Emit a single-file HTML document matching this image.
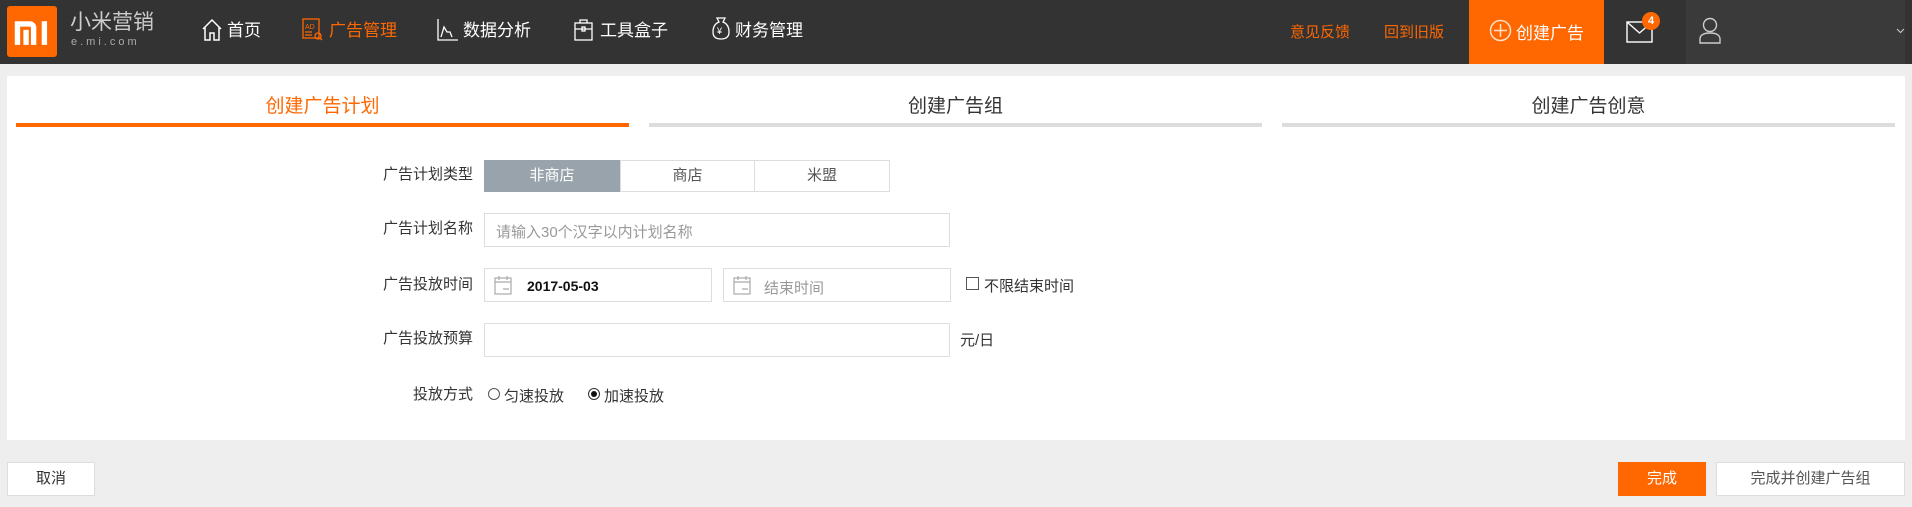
<!DOCTYPE html>
<html><head><meta charset="utf-8"><style>
*{margin:0;padding:0;box-sizing:border-box}
body{width:1912px;height:507px;background:#efeeee;font-family:"Liberation Sans","Noto Sans CJK SC",sans-serif;position:relative;overflow:hidden;color:#333}
.a{position:absolute}
.nav{left:0;top:0;width:1912px;height:64px;background:#333}
.nt{font-size:17px;color:#fff;top:20px;line-height:22px}
.lbl{font-size:15px;color:#333;text-align:right;width:160px;left:313px;line-height:18px}
.inp{background:#fff;border:1px solid #ddd}
.ph{font-size:15px;color:#999}
</style></head><body>
<div class="a nav"></div>
<div class="a" style="left:7px;top:6px;width:50px;height:51px;background:#ff6700;border-radius:3px"></div>
<svg class="a" style="left:12px;top:18px" width="40" height="28" viewBox="0 0 36 26"><path d="M2 3h14a6 6 0 0 1 6 6v16h-5V9a1 1 0 0 0-1-1H7v17H2zM10 11h5v14h-5zM27 3h5v22h-5z" fill="#fff"/></svg>
<div class="a" style="left:70px;top:10px;font-size:21px;color:#ccc;line-height:26px">小米营销</div>
<div class="a" style="left:71px;top:36px;font-size:11px;color:#aaa;letter-spacing:3px">e.mi.com</div>
<svg class="a" style="left:201px;top:18px" width="22" height="23" viewBox="0 0 22 23" fill="none" stroke="#fff" stroke-width="1.5"><path d="M2 11L11 2l9 9M4 9v13h5v-7h4v7h5V9"/></svg>
<div class="a nt" style="left:227px">首页</div>
<svg class="a" style="left:302px;top:18px" width="22" height="23" viewBox="0 0 22 23" fill="none" stroke="#ff6700" stroke-width="1.3"><rect x="1" y="1" width="16" height="19"/><text x="3" y="11" font-size="7" fill="#ff6700" stroke="none">AD</text><path d="M3 14h7M3 17h7"/><circle cx="16" cy="18" r="3"/><path d="M18 20l2 2"/></svg>
<div class="a nt" style="left:329px;color:#ff6700">广告管理</div>
<svg class="a" style="left:437px;top:18px" width="22" height="23" viewBox="0 0 22 23" fill="none" stroke="#fff" stroke-width="1.3"><path d="M1 1v21h20M4 19l3-10 3 5 3 0 2 5"/></svg>
<div class="a nt" style="left:463px">数据分析</div>
<svg class="a" style="left:573px;top:18px" width="22" height="23" viewBox="0 0 22 23" fill="none" stroke="#fff" stroke-width="1.3"><rect x="2" y="5" width="17" height="17"/><path d="M7 5V2h7v3M2 11h17"/><rect x="9" y="9" width="3" height="4"/></svg>
<div class="a nt" style="left:600px">工具盒子</div>
<svg class="a" style="left:711px;top:16px" width="20" height="25" viewBox="0 0 20 25" fill="none" stroke="#fff" stroke-width="1.3"><path d="M6 2h8l-2 4c5 2 6 6 6 10 0 5-3 7-8 7s-8-2-8-7c0-4 1-8 6-10z"/><text x="6" y="18" font-size="9" fill="#fff" stroke="none">¥</text></svg>
<div class="a nt" style="left:735px">财务管理</div>
<div class="a" style="left:1290px;top:21px;font-size:15px;color:#ff6700">意见反馈</div>
<div class="a" style="left:1384px;top:21px;font-size:15px;color:#ff6700">回到旧版</div>
<div class="a" style="left:1469px;top:0;width:135px;height:64px;background:#ff6700"></div>
<svg class="a" style="left:1489px;top:19px" width="23" height="23" viewBox="0 0 23 23" fill="none" stroke="#fde0c8" stroke-width="1.5"><circle cx="11.5" cy="11.5" r="10"/><path d="M11.5 5v13M5 11.5h13"/></svg>
<div class="a" style="left:1516px;top:19px;font-size:17px;color:#fff">创建广告</div>
<div class="a" style="left:1686px;top:0;width:219px;height:64px;background:#3a3a3a"></div>
<svg class="a" style="left:1626px;top:20px" width="28" height="23" viewBox="0 0 28 23" fill="none" stroke="#fff" stroke-width="1.4"><rect x="1" y="2" width="25" height="20"/><path d="M1 2l12.5 11L26 2"/></svg>
<div class="a" style="left:1642px;top:12px;width:18px;height:18px;border-radius:9px;background:#ff6700;color:#fff;font-size:11px;font-weight:bold;text-align:center;line-height:18px">4</div>
<svg class="a" style="left:1699px;top:17px" width="22" height="27" viewBox="0 0 22 27" fill="none" stroke="#ccc" stroke-width="1.4"><circle cx="11" cy="8" r="6.5"/><path d="M1 26v-4c0-4 4-6 10-6s10 2 10 6v4z"/></svg>
<svg class="a" style="left:1896px;top:28px" width="9" height="6" viewBox="0 0 9 6" fill="none" stroke="#ccc"><path d="M1 1l3.5 3.5L8 1"/></svg>
<div class="a" style="left:7px;top:76px;width:1898px;height:364px;background:#fff"></div>
<div class="a" style="left:16px;top:91px;width:613px;text-align:center;font-size:19px;color:#ff6700">创建广告计划</div>
<div class="a" style="left:16px;top:123px;width:613px;height:4px;background:#ff6700"></div>
<div class="a" style="left:649px;top:91px;width:613px;text-align:center;font-size:19px;color:#333">创建广告组</div>
<div class="a" style="left:649px;top:123px;width:613px;height:4px;background:#ddd"></div>
<div class="a" style="left:1282px;top:91px;width:613px;text-align:center;font-size:19px;color:#333">创建广告创意</div>
<div class="a" style="left:1282px;top:123px;width:613px;height:4px;background:#ddd"></div>
<div class="a lbl" style="top:166px">广告计划类型</div>
<div class="a" style="left:484px;top:160px;width:136px;height:32px;background:#98a3ab;color:#fff;font-size:15px;text-align:center;line-height:32px">非商店</div>
<div class="a inp" style="left:620px;top:160px;width:135px;height:32px;font-size:15px;text-align:center;line-height:30px;color:#555">商店</div>
<div class="a inp" style="left:754px;top:160px;width:136px;height:32px;font-size:15px;text-align:center;line-height:30px;color:#555">米盟</div>
<div class="a lbl" style="top:220px">广告计划名称</div>
<div class="a inp" style="left:484px;top:213px;width:466px;height:34px"></div>
<div class="a ph" style="left:496px;top:221px">请输入30个汉字以内计划名称</div>
<div class="a lbl" style="top:276px">广告投放时间</div>
<div class="a inp" style="left:484px;top:268px;width:228px;height:34px"></div>
<div class="a inp" style="left:723px;top:268px;width:228px;height:34px"></div>
<svg class="a" style="left:494px;top:275px" width="18" height="20" viewBox="0 0 18 20" fill="none" stroke="#aaa" stroke-width="1.2"><rect x="1" y="3" width="16" height="16"/><path d="M1 7h16M5 1v4M13 1v4M9 14h6"/></svg>
<svg class="a" style="left:733px;top:275px" width="18" height="20" viewBox="0 0 18 20" fill="none" stroke="#aaa" stroke-width="1.2"><rect x="1" y="3" width="16" height="16"/><path d="M1 7h16M5 1v4M13 1v4M9 14h6"/></svg>
<div class="a" style="left:527px;top:278px;font-size:14px;font-weight:bold;color:#111">2017-05-03</div>
<div class="a ph" style="left:764px;top:277px">结束时间</div>
<div class="a" style="left:966px;top:277px;width:13px;height:13px;border:1px solid #555"></div>
<div class="a" style="left:984px;top:275px;font-size:15px">不限结束时间</div>
<div class="a lbl" style="top:330px">广告投放预算</div>
<div class="a inp" style="left:484px;top:323px;width:466px;height:34px"></div>
<div class="a" style="left:960px;top:329px;font-size:15px">元/日</div>
<div class="a lbl" style="top:386px">投放方式</div>
<div class="a" style="left:488px;top:388px;width:12px;height:12px;border:1px solid #555;border-radius:50%"></div>
<div class="a" style="left:504px;top:385px;font-size:15px">匀速投放</div>
<div class="a" style="left:588px;top:388px;width:12px;height:12px;border:1px solid #333;border-radius:50%"></div>
<div class="a" style="left:591px;top:391px;width:6px;height:6px;background:#111;border-radius:50%"></div>
<div class="a" style="left:604px;top:385px;font-size:15px">加速投放</div>
<div class="a inp" style="left:7px;top:462px;width:88px;height:34px;text-align:center;line-height:32px;font-size:15px">取消</div>
<div class="a" style="left:1618px;top:462px;width:88px;height:34px;background:#ff6700;color:#fff;text-align:center;line-height:34px;font-size:15px">完成</div>
<div class="a inp" style="left:1716px;top:462px;width:189px;height:34px;text-align:center;line-height:32px;font-size:15px;color:#555">完成并创建广告组</div>
</body></html>
